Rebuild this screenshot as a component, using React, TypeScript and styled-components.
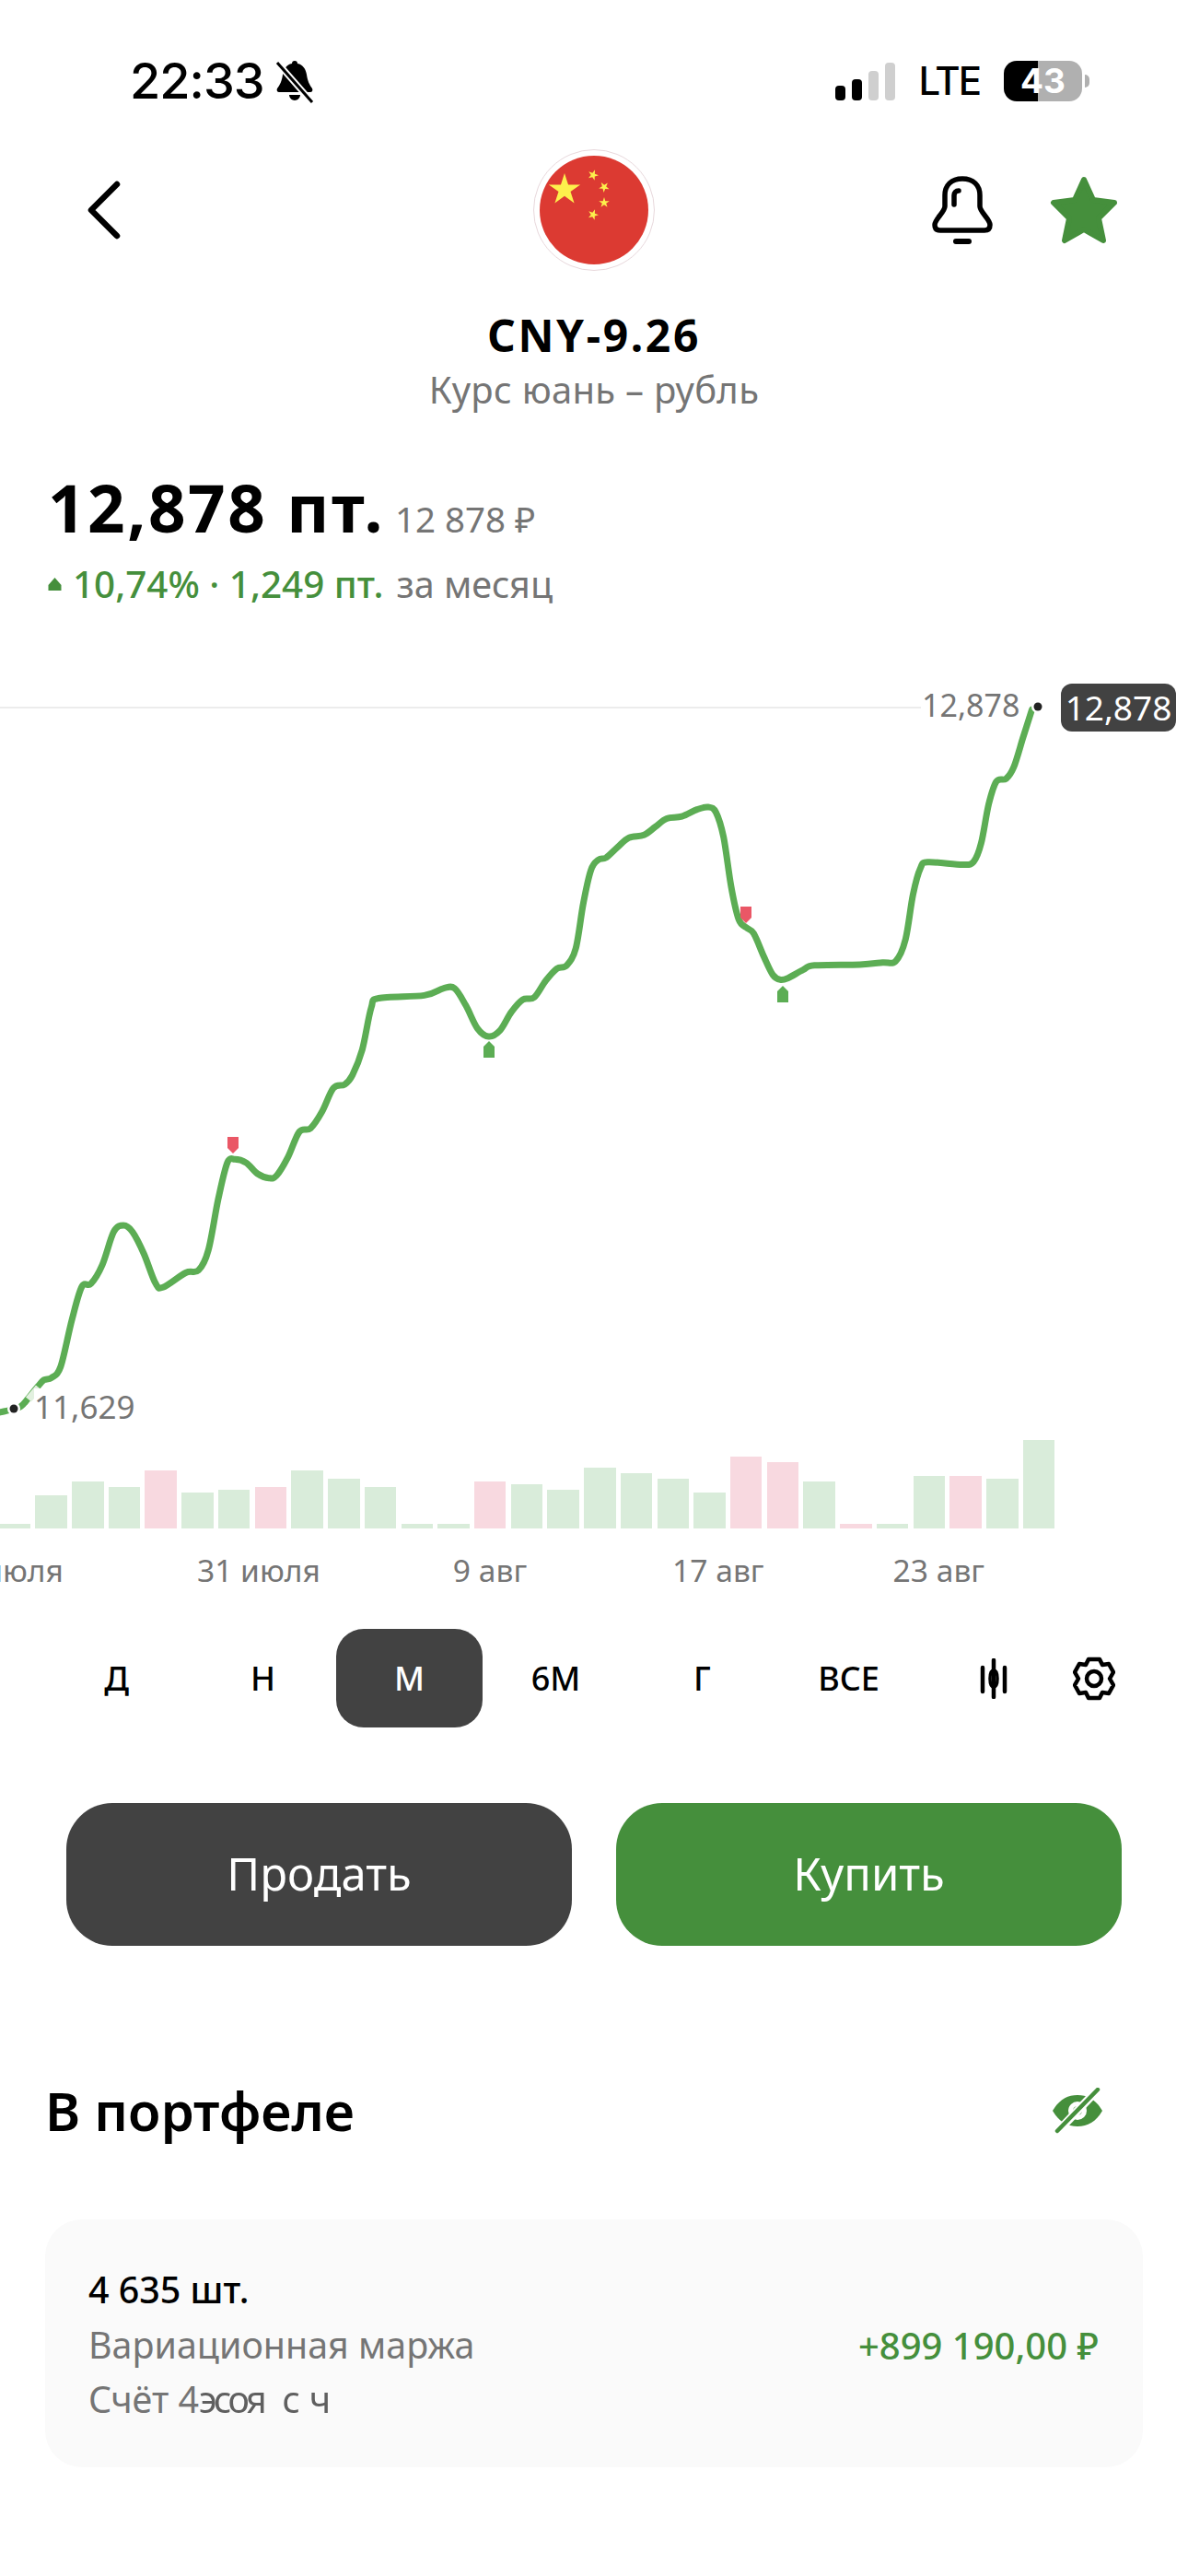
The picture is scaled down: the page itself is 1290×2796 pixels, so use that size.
import React from 'react';
import styled, {createGlobalStyle} from 'styled-components';

const GREEN = '#458f3c';
const LINE = '#5cad54';
const DARK = '#424242';
const GRAY = '#757575';

const GlobalStyle = createGlobalStyle`
    html, body {
        margin: 0;
        padding: 0;
        background: #fff;
    }
    body {
        font-family: "Noto Sans", "Open Sans", sans-serif;
        color: #000;
    }
`;

// traced from the chart, page pixels = (x * .8227, top + y * scale)
const upper = [[490,1375],[500,1352],[560,1345],[585,1328],[600,1328],[615,1370],[630,1425],[645,1445],[660,1430],[675,1385],[690,1355],[705,1350],[720,1310],[735,1280],[748,1272],[760,1230],[770,1120],[780,1040],[790,1015],[800,1010],[815,985],[830,962],[850,955],[865,935],[880,915],[900,910],[920,893],[935,887],[945,900],[955,960],[965,1080],[975,1160],[985,1180],[995,1195],[1008,1250],[1020,1295],[1030,1307],[1040,1303],[1060,1283],[1075,1272],[1135,1270],[1165,1265],[1182,1262],[1195,1210],[1205,1100],[1215,1035],[1225,1021],[1270,1027],[1285,1020],[1295,975],[1305,880],[1315,825],[1328,818],[1338,790],[1350,720],[1362,650]];
const lower = [[0,1095],[20,1085],[28,1078],[36,1060],[50,1024],[58,1006],[68,1000],[80,970],[95,840],[108,750],[120,742],[135,690],[150,600],[163,582],[175,600],[190,660],[205,740],[215,752],[245,712],[262,705],[275,650],[288,510],[300,410],[310,400],[325,410],[340,440],[355,452],[365,445],[380,395],[395,325],[410,315],[425,270],[440,205],[455,195],[465,170],[478,100]];

const CHART_TOP = 720;
const points = [
    ...lower.map(([x, y]) => [x * .8227, 1100 + y * .3954 - CHART_TOP]),
    ...upper.map(([x, y]) => [x * .8227, 480 + y * .4464 - CHART_TOP]),
];

function smoothPath(pts: number[][]) {
    let d = `M${pts[0][0]} ${pts[0][1]}`;
    for (let i = 0; i < pts.length - 1; i++) {
        const p0 = pts[Math.max(i - 1, 0)];
        const p1 = pts[i];
        const p2 = pts[i + 1];
        const p3 = pts[Math.min(i + 2, pts.length - 1)];
        const c1x = p1[0] + (p2[0] - p0[0]) / 6;
        const c1y = p1[1] + (p2[1] - p0[1]) / 6;
        const c2x = p2[0] - (p3[0] - p1[0]) / 6;
        const c2y = p2[1] - (p3[1] - p1[1]) / 6;
        d += ` C${c1x.toFixed(1)} ${c1y.toFixed(1)} ${c2x.toFixed(1)} ${c2y.toFixed(1)} ${p2[0].toFixed(1)} ${p2[1].toFixed(1)}`;
    }
    return d;
}

const bars: [number, boolean?][] = [
    [5], [36], [51], [45], [63, true], [39], [42], [45, true], [63], [54], [45], [5], [5], [51, true], [48],
    [42], [66], [60], [54], [39], [78, true], [72, true], [51], [5, true], [5], [57], [57, true], [54], [96],
];

const Page = styled.div`
    width: 1290px;
    height: 2796px;
    overflow: hidden;
    background: #fff;
`;

const StatusBar = styled.div`
    height: 162px;
    box-sizing: border-box;
    padding: 62px 107px 0 141px;
    display: flex;
    justify-content: space-between;
    align-items: flex-start;
    font-family: Inter, sans-serif;
`;

const StatusGroup = styled.div`
    display: flex;
    align-items: center;
    height: 52px;
`;

const Clock = styled.span`
    font-size: 54px;
    font-weight: 500;
    letter-spacing: -1px;
    line-height: 52px;
    margin-right: 12px;
`;

const SignalBars = styled.div`
    display: flex;
    align-items: flex-end;
    gap: 7px;
    height: 41px;
`;

const SignalBar = styled.i<{$h: number; $on?: boolean}>`
    display: block;
    width: 11px;
    height: ${p => p.$h}px;
    border-radius: 4px;
    background: ${p => (p.$on ? '#000' : '#cfcfcf')};
`;

const Lte = styled.span`
    font-size: 42px;
    font-weight: 500;
    letter-spacing: -2px;
    line-height: 52px;
    margin: 0 26px 0 25px;
`;

const Battery = styled.div`
    position: relative;
    width: 85px;
    height: 44px;
    border-radius: 14px;
    overflow: hidden;
    background: linear-gradient(90deg, #000 0, #000 43.5%, #b0b0b0 43.5%, #b0b0b0 100%);
    color: #fff;
    font-size: 37px;
    font-weight: 700;
    line-height: 44px;
    text-align: center;
`;

const BatteryNub = styled.i`
    display: block;
    width: 5px;
    height: 14px;
    margin-left: 3px;
    border-radius: 0 5px 5px 0;
    background: #b0b0b0;
`;

const Header = styled.div`
    height: 132px;
    display: grid;
    grid-template-columns: 1fr 132px 1fr;
    align-items: center;
`;

const BackButton = styled.div`
    padding-left: 94px;
    display: flex;
`;

const Actions = styled.div`
    display: flex;
    justify-content: flex-end;
    align-items: center;
    gap: 61px;
    padding-right: 76px;
`;

const FlagRing = styled.div`
    width: 132px;
    height: 132px;
    box-sizing: border-box;
    border: 1px solid #e8d8dc;
    border-radius: 50%;
    padding: 6px;
`;

const Title = styled.h1`
    margin: 48px 0 0;
    font-size: 48px;
    line-height: 44px;
    font-weight: 700;
    letter-spacing: 2.6px;
    text-align: center;
`;

const Subtitle = styled.div`
    margin-top: 15px;
    font-size: 40px;
    line-height: 44px;
    letter-spacing: .3px;
    color: ${GRAY};
    text-align: center;
`;

const PriceRow = styled.div`
    margin-top: 66px;
    padding-left: 52px;
    display: flex;
    align-items: baseline;
    gap: 11px;
    height: 80px;
`;

const Price = styled.span`
    font-size: 71px;
    line-height: 80px;
    font-weight: 700;
    letter-spacing: 2.5px;
`;

const PriceRub = styled.span`
    font-size: 38.5px;
    color: ${GRAY};
`;

const ChangeRow = styled.div`
    margin-top: 21px;
    padding-left: 52px;
    display: flex;
    align-items: center;
    height: 44px;
    font-size: 40.4px;
    line-height: 44px;
`;

const ChangeValue = styled.span`
    color: ${GREEN};
    font-weight: 500;
    margin: 0 14px 0 12px;
`;

const ChangePeriod = styled.span`
    color: ${GRAY};
    font-size: 39.5px;
`;

const Chart = styled.div`
    position: relative;
    margin-top: 64px;
`;

const ChartSvg = styled.svg`
    display: block;
`;

const PriceLabel = styled.span<{$left: number; $top: number; $size: number}>`
    position: absolute;
    left: ${p => p.$left}px;
    top: ${p => p.$top}px;
    font-size: ${p => p.$size}px;
    line-height: 40px;
    color: ${GRAY};
    background: #fff;
`;

const PriceBadge = styled.span`
    position: absolute;
    left: 1152px;
    top: 22px;
    width: 125px;
    height: 52px;
    border-radius: 12px;
    background: ${DARK};
    color: #fff;
    font-size: 37px;
    line-height: 52px;
    text-align: center;
`;

const Bars = styled.div`
    display: flex;
    align-items: flex-end;
    gap: 5.22px;
    height: 96px;
    margin-left: -1.4px;
`;

const Bar = styled.i<{$h: number; $down?: boolean}>`
    display: block;
    flex: none;
    width: 34.5px;
    height: ${p => p.$h}px;
    background: ${p => (p.$down ? '#f8d9e0' : '#d9ecda')};
`;

const Dates = styled.div`
    margin: 23px 0 0 -65px;
    display: flex;
    height: 44px;
    font-size: 33.6px;
    line-height: 44px;
    color: ${GRAY};
    white-space: nowrap;
`;

const DateLabel = styled.span<{$gap?: number}>`
    margin-left: ${p => p.$gap ?? 0}px;
`;

const Tabs = styled.div`
    margin-top: 42px;
    padding-left: 47px;
    display: flex;
    align-items: center;
    height: 107px;
`;

const Tab = styled.div<{$active?: boolean}>`
    width: 159px;
    height: 107px;
    flex: none;
    display: flex;
    align-items: center;
    justify-content: center;
    border-radius: 30px;
    font-size: 36px;
    font-weight: 500;
    background: ${p => (p.$active ? DARK : 'transparent')};
    color: ${p => (p.$active ? '#fff' : '#000')};
`;

const TabIcon = styled.div<{$gap: number}>`
    display: flex;
    flex: none;
    margin-left: ${p => p.$gap}px;
`;

const Buttons = styled.div`
    margin-top: 82px;
    padding: 0 72px;
    display: grid;
    grid-template-columns: 1fr 1fr;
    gap: 48px;
`;

const TradeButton = styled.button<{$buy?: boolean}>`
    height: 155px;
    padding: 0 0 4px;
    border: 0;
    border-radius: 50px;
    background: ${p => (p.$buy ? GREEN : DARK)};
    color: #fff;
    font-family: inherit;
    font-size: 49px;
`;

const SectionHead = styled.div`
    margin-top: 144px;
    height: 70px;
    padding: 0 92px 0 49px;
    display: flex;
    justify-content: space-between;
    align-items: center;
`;

const SectionTitle = styled.h2`
    margin: 0;
    font-size: 58px;
    line-height: 70px;
    font-weight: 600;
`;

const Card = styled.div`
    margin: 83px 49px 0;
    height: 269px;
    box-sizing: border-box;
    padding: 47px 47px 0;
    border-radius: 40px;
    background: #fafafa;
`;

const CardRow = styled.div`
    display: flex;
    justify-content: space-between;
    padding-right: 1px;
    height: 59.5px;
    font-size: 39.4px;
    line-height: 59.5px;
`;

const Quantity = styled.span`
    font-weight: 500;
    color: #000;
`;

const Muted = styled.span`
    color: ${GRAY};
`;

const Amount = styled.span`
    color: ${GREEN};
    font-weight: 500;
    font-size: 40px;
`;

const Redacted = styled.span`
    color: #5f5f5f;
    letter-spacing: -3.5px;
    filter: blur(.6px);
`;

function MutedBell() {
    return <svg width="42" height="48" viewBox="0 0 42 48">
        <path d="M21 2c2 0 3 1 3 3 6 1 9 6 10 12 1 7 3 11 6 15 1 2 0 4-2 4H4c-2 0-3-2-2-4 3-4 5-8 6-15C9 11 12 6 18 5c0-2 1-3 3-3z" fill="#000"/>
        <path d="M15 39h12c0 3-3 6-6 6s-6-3-6-6z" fill="#000"/>
        <path d="M3 5l36 41" stroke="#fff" strokeWidth="7"/>
        <path d="M2 4l38 43" stroke="#000" strokeWidth="3"/>
    </svg>;
}

function FlagStar({x, y, r, rot = 0}: {x: number; y: number; r: number; rot?: number}) {
    const pts = Array.from({length: 10}, (_, i) => {
        const rad = i % 2 ? r * .38 : r;
        const a = (-90 + rot + i * 36) * Math.PI / 180;
        return `${(x + rad * Math.cos(a)).toFixed(2)},${(y + rad * Math.sin(a)).toFixed(2)}`;
    }).join(' ');
    return <polygon points={pts} fill="#fdf04c"/>;
}

function Flag() {
    return <svg width="118" height="118" viewBox="0 0 118 118" style={{display: 'block'}}>
        <circle cx="59" cy="59" r="59" fill="#dc3a32"/>
        <FlagStar x={27} y={37} r={18}/>
        <FlagStar x={58} y={21} r={6} rot={20}/>
        <FlagStar x={70} y={34} r={6} rot={40}/>
        <FlagStar x={70} y={51} r={6} rot={0}/>
        <FlagStar x={58} y={64} r={6} rot={20}/>
    </svg>;
}

function Marker({x, y, down}: {x: number; y: number; down?: boolean}) {
    return down
        ? <path d={`M${x - 6} ${y}h12v12l-6 6-6-6z`} fill="#ea5766"/>
        : <path d={`M${x} ${y}l6 6v12h-12v-12z`} fill={LINE}/>;
}

export default function App() {
    return <Page>
        <GlobalStyle/>
        <StatusBar>
            <StatusGroup>
                <Clock>22:33</Clock>
                <MutedBell/>
            </StatusGroup>
            <StatusGroup>
                <SignalBars>
                    <SignalBar $on $h={16}/>
                    <SignalBar $on $h={23}/>
                    <SignalBar $h={32}/>
                    <SignalBar $h={41}/>
                </SignalBars>
                <Lte>LTE</Lte>
                <Battery>43</Battery>
                <BatteryNub/>
            </StatusGroup>
        </StatusBar>

        <Header>
            <BackButton>
                <svg width="38" height="64" viewBox="0 0 38 64" fill="none">
                    <path d="M33 4L5 32l28 28" stroke="#000" strokeWidth="6.5" strokeLinecap="round" strokeLinejoin="round"/>
                </svg>
            </BackButton>
            <FlagRing><Flag/></FlagRing>
            <Actions>
                <svg width="68" height="74" viewBox="0 0 68 74" fill="none" stroke="#000" strokeLinecap="round">
                    <path d="M34 3C22 3 15 10 15 21v12c0 6-11 14-11 20 0 4 2 6 6 6h48c4 0 6-2 6-6 0-6-11-14-11-20V21C53 10 46 3 34 3z" strokeWidth="5.5"/>
                    <path d="M25 31V21c0-3 2-5 5-5" strokeWidth="5.5"/>
                    <path d="M27 71h14" strokeWidth="6"/>
                </svg>
                <svg width="74" height="74" viewBox="0 0 74 74">
                    <path d="M37 4l10 22 23 3-17 17 5 24-21-12-21 12 5-24L4 29l23-3z" fill={GREEN} stroke={GREEN} strokeWidth="6" strokeLinejoin="round"/>
                </svg>
            </Actions>
        </Header>

        <Title>CNY-9.26</Title>
        <Subtitle>Курс юань – рубль</Subtitle>

        <PriceRow>
            <Price>12,878 пт.</Price>
            <PriceRub>12 878 ₽</PriceRub>
        </PriceRow>
        <ChangeRow>
            <svg width="15" height="14" viewBox="0 0 15 14"><path d="M7.5 0l7 8v6H.5V8z" fill={GREEN}/></svg>
            <ChangeValue>10,74% · 1,249 пт.</ChangeValue>
            <ChangePeriod>за месяц</ChangePeriod>
        </ChangeRow>

        <Chart>
            <ChartSvg width="1290" height="843" viewBox="0 0 1290 843" fill="none">
                <path d="M0 48H1000" stroke="#ececec" strokeWidth="2"/>
                <path d={smoothPath(points)} stroke={LINE} strokeWidth="7" strokeLinecap="round" strokeLinejoin="round"/>
                <path d="M31 799L42 786" stroke="#e2f0df" strokeWidth="8"/>
                <Marker x={253} y={514} down/>
                <Marker x={531} y={410}/>
                <Marker x={810} y={264} down/>
                <Marker x={850} y={350}/>
                <circle cx="15" cy="809" r="4.5" fill="#222" stroke="#fff" strokeWidth="5" paintOrder="stroke"/>
                <circle cx="1127" cy="47" r="4.5" fill="#222" stroke="#fff" strokeWidth="5" paintOrder="stroke"/>
            </ChartSvg>
            <PriceLabel $left={1001} $top={25} $size={34}>12,878</PriceLabel>
            <PriceBadge>12,878</PriceBadge>
            <PriceLabel $left={37} $top={787} $size={35}>11,629</PriceLabel>
            <Bars>
                {bars.map(([h, down], i) => <Bar key={i} $h={h} $down={down}/>)}
            </Bars>
        </Chart>

        <Dates>
            <DateLabel>24 июля</DateLabel>
            <DateLabel $gap={145}>31 июля</DateLabel>
            <DateLabel $gap={144}>9 авг</DateLabel>
            <DateLabel $gap={158}>17 авг</DateLabel>
            <DateLabel $gap={140}>23 авг</DateLabel>
        </Dates>

        <Tabs>
            <Tab>Д</Tab>
            <Tab>Н</Tab>
            <Tab $active>М</Tab>
            <Tab>6М</Tab>
            <Tab>Г</Tab>
            <Tab>ВСЕ</Tab>
            <TabIcon $gap={63}>
                <svg width="30" height="44" viewBox="0 0 30 44" fill="none" stroke="#000" strokeLinecap="round" strokeWidth="4.5">
                    <path d="M3 10v26M27 10v26M15 2v40"/>
                    <path d="M15 13c3 0 4 4 4 9s-1 9-4 9-4-4-4-9 1-9 4-9z" strokeWidth="3.5"/>
                </svg>
            </TabIcon>
            <TabIcon $gap={71}>
                <svg width="46" height="48" viewBox="0 0 46 48" fill="none" stroke="#000" strokeWidth="4.5" strokeLinejoin="round">
                    <path d="M17 3h12l3 6 7-1 5 9-4 7 4 7-5 9-7-1-3 6H17l-3-6-7 1-5-9 4-7-4-7 5-9 7 1z"/>
                    <circle cx="23" cy="24" r="8"/>
                </svg>
            </TabIcon>
        </Tabs>

        <Buttons>
            <TradeButton>Продать</TradeButton>
            <TradeButton $buy>Купить</TradeButton>
        </Buttons>

        <SectionHead>
            <SectionTitle>В портфеле</SectionTitle>
            <svg width="56" height="50" viewBox="0 0 56 50">
                <path d="M1 25C8 13 17 8 28 8s20 5 27 17c-7 12-16 17-27 17S8 37 1 25z" fill={GREEN}/>
                <circle cx="28" cy="25" r="10" fill="#fff"/>
                <circle cx="28" cy="25" r="5" fill={GREEN}/>
                <path d="M5 49L51 1" stroke="#fff" strokeWidth="9"/>
                <path d="M6 47L50 2" stroke={GREEN} strokeWidth="4.5" strokeLinecap="round"/>
            </svg>
        </SectionHead>

        <Card>
            <CardRow><Quantity>4 635 шт.</Quantity></CardRow>
            <CardRow><Muted>Вариационная маржа</Muted><Amount>+899 190,00 ₽</Amount></CardRow>
            <CardRow><Muted>Счёт 4<Redacted>эсоя&nbsp;&nbsp; с&nbsp; ч</Redacted></Muted></CardRow>
        </Card>
    </Page>;
}
